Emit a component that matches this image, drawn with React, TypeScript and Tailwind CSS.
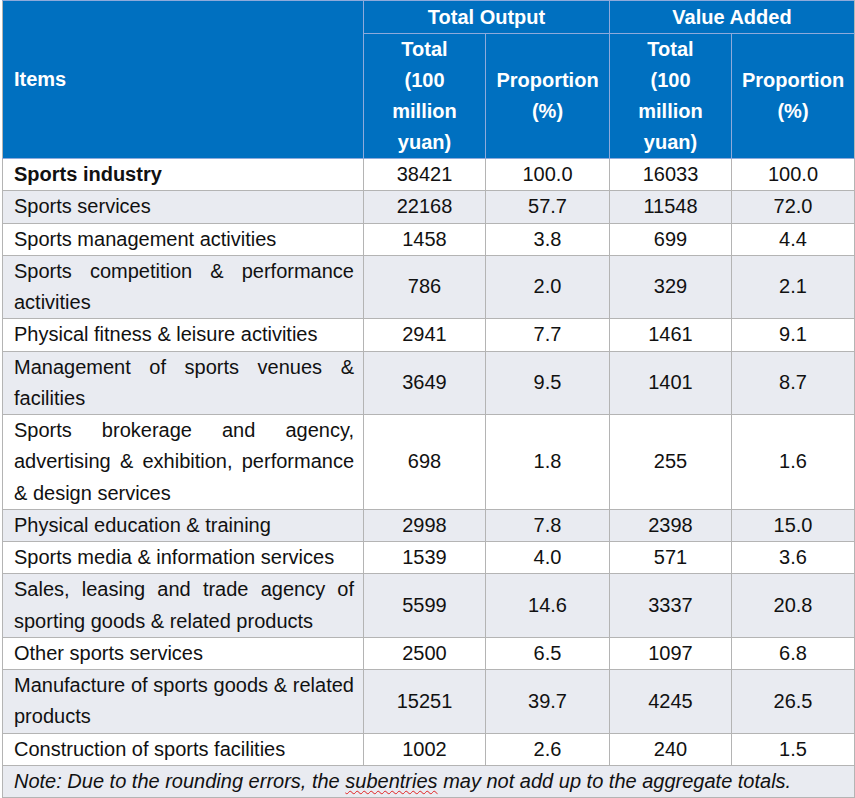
const rows: { item: string; a: string; b: string; c: string; d: string; bold?: boolean }[] = [
  { item: "Sports industry", a: "38421", b: "100.0", c: "16033", d: "100.0", bold: true },
  { item: "Sports services", a: "22168", b: "57.7", c: "11548", d: "72.0" },
  { item: "Sports management activities", a: "1458", b: "3.8", c: "699", d: "4.4" },
  { item: "Sports competition & performance activities", a: "786", b: "2.0", c: "329", d: "2.1" },
  { item: "Physical fitness & leisure activities", a: "2941", b: "7.7", c: "1461", d: "9.1" },
  { item: "Management of sports venues & facilities", a: "3649", b: "9.5", c: "1401", d: "8.7" },
  {
    item: "Sports brokerage and agency, advertising & exhibition, performance & design services",
    a: "698",
    b: "1.8",
    c: "255",
    d: "1.6",
  },
  { item: "Physical education & training", a: "2998", b: "7.8", c: "2398", d: "15.0" },
  { item: "Sports media & information services", a: "1539", b: "4.0", c: "571", d: "3.6" },
  {
    item: "Sales, leasing and trade agency of sporting goods & related products",
    a: "5599",
    b: "14.6",
    c: "3337",
    d: "20.8",
  },
  { item: "Other sports services", a: "2500", b: "6.5", c: "1097", d: "6.8" },
  { item: "Manufacture of sports goods & related products", a: "15251", b: "39.7", c: "4245", d: "26.5" },
  { item: "Construction of sports facilities", a: "1002", b: "2.6", c: "240", d: "1.5" },
];

export default function App() {
  const th = "border border-[#8eaadb] font-bold text-white leading-[31px] p-0";
  const cell = "border border-[#b4b4b4] leading-[31.25px] p-0 align-middle";
  const num = `${cell} text-center`;

  return (
    <div className="w-[855px] h-[798px] bg-white pl-[2px] font-['Liberation_Sans',Arial,sans-serif] text-[20px] text-[#111]">
      <table className="table-fixed border-collapse w-[852px]">
        <colgroup>
          <col className="w-[361px]" />
          <col className="w-[122px]" />
          <col className="w-[124px]" />
          <col className="w-[122px]" />
          <col className="w-[123px]" />
        </colgroup>
        <thead className="bg-[#0070c0]">
          <tr className="border-t border-t-[#4472c4]">
            <th rowSpan={2} className={`${th} text-left pl-[11px] border-l-[#b4b4b4]`}>
              Items
            </th>
            <th colSpan={2} className={`${th} text-center pt-px`}>
              Total Output
            </th>
            <th colSpan={2} className={`${th} text-center pt-px border-r-[#b4b4b4]`}>
              Value Added
            </th>
          </tr>
          <tr>
            <th className={`${th} text-center`}>
              Total
              <br />
              (100
              <br />
              million
              <br />
              yuan)
            </th>
            <th className={`${th} text-center`}>
              Proportion
              <br />
              (%)
            </th>
            <th className={`${th} text-center`}>
              Total
              <br />
              (100
              <br />
              million
              <br />
              yuan)
            </th>
            <th className={`${th} text-center border-r-[#b4b4b4]`}>
              Proportion
              <br />
              (%)
            </th>
          </tr>
        </thead>
        <tbody>
          {rows.map((r, i) => (
            <tr key={r.item} className={i % 2 === 1 ? "bg-[#e9ebf1]" : "bg-white"}>
              <td className={`${cell} text-justify pl-[11px] pr-[9px] ${r.bold ? "font-bold" : ""}`}>
                {r.item}
              </td>
              <td className={num}>{r.a}</td>
              <td className={num}>{r.b}</td>
              <td className={num}>{r.c}</td>
              <td className={num}>{r.d}</td>
            </tr>
          ))}
          <tr className="bg-[#e9ebf1]">
            <td colSpan={5} className={`${cell} pl-[11px] italic`}>
              Note: Due to the rounding errors, the{" "}
              <span className="underline decoration-wavy decoration-[#e02020] decoration-1 underline-offset-2">
                subentries
              </span>{" "}
              may not add up to the aggregate totals.
            </td>
          </tr>
        </tbody>
      </table>
    </div>
  );
}
